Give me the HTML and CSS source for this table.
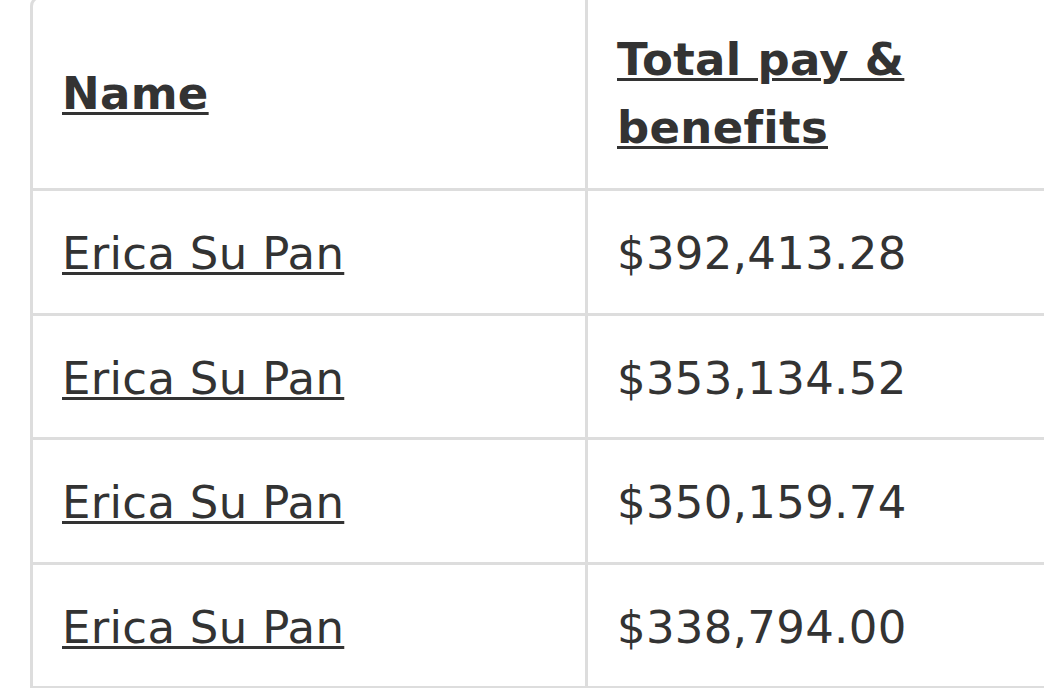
FILE: index.html
```html
<!DOCTYPE html>
<html>
<head>
<meta charset="utf-8">
<link rel="stylesheet" href="styles.css">
</head>
<body>
<table class="pay-table">
  <thead>
    <tr>
      <th class="col-name"><a href="#">Name</a></th>
      <th class="col-pay"><a href="#">Total pay &amp; benefits</a></th>
    </tr>
  </thead>
  <tbody>
    <tr>
      <td class="col-name"><a href="#">Erica Su Pan</a></td>
      <td class="col-pay">$392,413.28</td>
    </tr>
    <tr>
      <td class="col-name"><a href="#">Erica Su Pan</a></td>
      <td class="col-pay">$353,134.52</td>
    </tr>
    <tr>
      <td class="col-name"><a href="#">Erica Su Pan</a></td>
      <td class="col-pay">$350,159.74</td>
    </tr>
    <tr>
      <td class="col-name"><a href="#">Erica Su Pan</a></td>
      <td class="col-pay">$338,794.00</td>
    </tr>
  </tbody>
</table>
</body>
</html>
```
FILE: styles.css
```css
html, body {
  margin: 0;
  padding: 0;
  background: #ffffff;
  overflow: hidden;
}

body {
  font-family: "DejaVu Sans", Verdana, sans-serif;
  font-size: 45px;
  line-height: 67.5px;
  color: #333333;
  letter-spacing: 0.3px;
}

.pay-table {
  margin-top: -4px;
  margin-left: 30px;
  width: 1100px;
  table-layout: fixed;
  border-collapse: separate;
  border-spacing: 0;
  border-left: 3px solid #dddddd;
  border-top: 3px solid #dddddd;
  border-top-left-radius: 10px;
}

.pay-table th,
.pay-table td {
  padding: 27px 29px;
  border-right: 3px solid #dddddd;
  border-bottom: 3px solid #dddddd;
  text-align: left;
  vertical-align: middle;
}

.pay-table td {
  padding-top: 29px;
  padding-bottom: 25px;
}

.pay-table th {
  font-weight: bold;
}

.col-name {
  width: 494px;
}

.pay-table a {
  color: #333333;
  text-decoration: underline;
  text-decoration-thickness: 3px;
  text-underline-offset: 3px;
}
```
